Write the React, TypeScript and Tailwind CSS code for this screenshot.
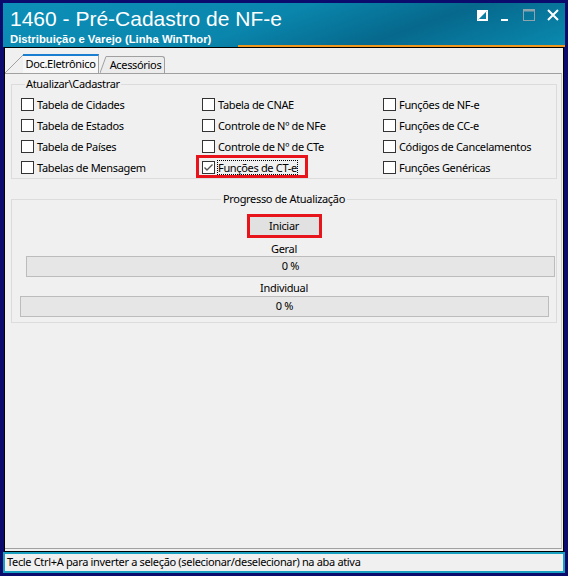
import React from "react";

const rows = [
  ["Tabela de Cidades", "Tabela de CNAE", "Funções de NF-e"],
  ["Tabela de Estados", "Controle de Nº de NFe", "Funções de CC-e"],
  ["Tabela de Países", "Controle de Nº de CTe", "Códigos de Cancelamentos"],
  ["Tabelas de Mensagem", "Funções de CT-e", "Funções Genéricas"],
];

function Box({ checked }: { checked?: boolean }) {
  return (
    <span className="w-[13px] h-[13px] shrink-0 border border-[#333] bg-white flex items-center justify-center">
      {checked && (
        <svg width="11" height="11" viewBox="0 0 11 11">
          <path d="M1.5 5.5 L4 8 L9.5 2.5" stroke="#555" strokeWidth="1.4" fill="none" />
        </svg>
      )}
    </span>
  );
}

function Bar() {
  return (
    <div className="h-[21px] w-[529px] border border-[#bcbcbc] bg-[#e6e6e6] flex items-center justify-center">
      0 %
    </div>
  );
}

export default function App() {
  return (
    <div className="w-[568px] h-[576px] bg-[#0b0b6e] p-[3px] flex flex-col font-['Noto_Sans',sans-serif] text-[11px] tracking-[-0.33px] text-black">
      {/* barra de título */}
      <header className="relative h-[44px] shrink-0 bg-[linear-gradient(160deg,#0c8fb8_0%,#0a86ad_45%,#06688c_70%,#0a8ab0_100%)] px-[7px] text-white tracking-normal">
        <div className="font-['Liberation_Sans',sans-serif] text-[21px] leading-[24px] pt-[4px]">1460 - Pré-Cadastro de NF-e</div>
        <div className="font-['Liberation_Sans',sans-serif] font-bold text-[11.3px] leading-[14px] mt-[1px]">Distribuição e Varejo (Linha WinThor)</div>
        <div className="absolute left-[235px] right-0 bottom-0 h-[2px] bg-[#f0961c]" />
        <div className="absolute right-[6px] top-[6px] flex items-center gap-[12px]">
          <svg width="11" height="11" viewBox="0 0 11 11">
            <rect x="0.5" y="0.5" width="10" height="10" fill="none" stroke="white" />
            <path d="M0 11 L11 0 L11 11 Z" fill="white" />
            <path d="M0 0 L11 0 L0 11 Z" fill="white" />
            <path d="M2 9 L9 2 L9 9 Z" fill="#0a7fa5" />
          </svg>
          <span className="w-[7px] h-[2px] bg-white mt-[9px] ml-[1px]" />
          <svg width="12" height="12" viewBox="0 0 12 12" className="ml-[3px]">
            <rect x="0.5" y="0.5" width="11" height="11" fill="none" stroke="#8fa3ad" />
            <rect x="0.5" y="0.5" width="11" height="2" fill="#8fa3ad" />
          </svg>
          <svg width="12" height="12" viewBox="0 0 12 12">
            <path d="M1 1 L11 11 M11 1 L1 11" stroke="white" strokeWidth="2" />
          </svg>
        </div>
      </header>

      {/* corpo */}
      <div className="flex-1 mx-[1px] border border-black bg-[#f0f0f0] flex flex-col pt-[6px] pb-[2px]">
        <div className="h-[19px] flex items-end">
          <svg width="18" height="19" viewBox="0 0 18 19" className="shrink-0">
            <path d="M0 19 L18 1" stroke="#a0a0a0" fill="none" />
          </svg>
          <div className="w-[76px] h-[19px] border-t-2 border-r border-t-[#1a7fd0] border-r-[#a0a0a0] bg-[#f7f7f7] flex items-center justify-center">
            Doc.Eletrônico
          </div>
          <svg width="7" height="17" viewBox="0 0 7 17" className="shrink-0 ml-[1px]">
            <path d="M0 17 L6 0.5 L7 0.5 L7 17 Z" fill="#ececec" />
            <path d="M0 17 L6 0.5 L7 0.5" stroke="#a0a0a0" fill="none" />
          </svg>
          <div className="w-[58px] h-[17px] border-t border-r border-[#a0a0a0] rounded-tr-[3px] bg-[#ececec] flex items-center justify-center">
            Acessórios
          </div>
        </div>

        <div className="flex-1 border-t border-r border-b border-t-[#a0a0a0] border-r-[#c8c8c8] border-b-[#a0a0a0] mr-[1px] px-[6px] pt-[4px]">
          <fieldset className="border border-[#dcdcdc] pl-[9px] pb-[4px] w-[546px]">
            <legend className="ml-[4px] px-[1px] leading-[12px]">Atualizar\Cadastrar</legend>
            <div className="grid grid-cols-[181px_181px_1fr] gap-y-[8px] mt-[8px]">
              {rows.flat().map((label) => {
                const checked = label === "Funções de CT-e";
                return (
                  <div key={label} className="relative flex items-center gap-[3px] h-[13px]">
                    <Box checked={checked} />
                    <span className={checked ? "outline outline-1 outline-dotted outline-black leading-[13px]" : "leading-[13px]"}>
                      {label}
                    </span>
                    {checked && (
                      <span className="absolute -left-[6px] -top-[6px] w-[112px] h-[23px] border-[3px] border-[#e8141c]" />
                    )}
                  </div>
                );
              })}
            </div>
          </fieldset>

          <fieldset className="mt-[14px] border border-[#dcdcdc] w-[546px] pb-[5px] flex flex-col">
            <legend className="mx-auto px-[2px] leading-[12px]">Progresso de Atualização</legend>
            <div className="flex justify-center mt-[9px]">
              <button className="w-[75px] h-[24px] border-[3px] border-[#e8141c] bg-[#e1e1e1]">Iniciar</button>
            </div>
            <div className="text-center leading-[14px] mt-[4px]">Geral</div>
            <div className="ml-[14px]"><Bar /></div>
            <div className="text-center leading-[14px] mt-[4px]">Individual</div>
            <div className="ml-[8px] mt-[1px]"><Bar /></div>
          </fieldset>
        </div>
      </div>

      {/* barra de status */}
      <div className="h-[21px] shrink-0 border-2 border-[#19a0c0] bg-[#f0f0f0] flex items-center px-[2px]">
        Tecle Ctrl+A para inverter a seleção (selecionar/deselecionar) na aba ativa
      </div>
    </div>
  );
}
